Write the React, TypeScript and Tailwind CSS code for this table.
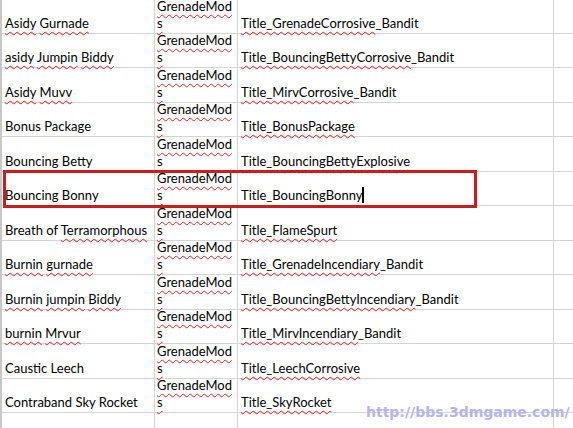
import React from "react";

type Row = {
  name: { t: string; bad?: boolean }[];
  title: string;
  tail?: string;
  titleBad?: boolean;
};

const rows: Row[] = [
  { name: [{ t: "Asidy", bad: true }, { t: "Gurnade", bad: true }], title: "Title_GrenadeCorrosive", tail: "_Bandit" },
  { name: [{ t: "asidy", bad: true }, { t: "Jumpin", bad: true }, { t: "Biddy", bad: true }], title: "Title_BouncingBettyCorrosive", tail: "_Bandit" },
  { name: [{ t: "Asidy", bad: true }, { t: "Muvv", bad: true }], title: "Title_MirvCorrosive", tail: "_Bandit" },
  { name: [{ t: "Bonus" }, { t: "Package" }], title: "Title_BonusPackage" },
  { name: [{ t: "Bouncing" }, { t: "Betty" }], title: "Title_BouncingBettyExplosive" },
  { name: [{ t: "Bouncing" }, { t: "Bonny" }], title: "Title_BouncingBonny", titleBad: false },
  { name: [{ t: "Breath" }, { t: "of" }, { t: "Terramorphous", bad: true }], title: "Title_FlameSpurt" },
  { name: [{ t: "Burnin", bad: true }, { t: "gurnade", bad: true }], title: "Title_GrenadeIncendiary", tail: "_Bandit" },
  { name: [{ t: "Burnin", bad: true }, { t: "jumpin", bad: true }, { t: "Biddy", bad: true }], title: "Title_BouncingBettyIncendiary", tail: "_Bandit" },
  { name: [{ t: "burnin", bad: true }, { t: "Mrvur", bad: true }], title: "Title_MirvIncendiary", tail: "_Bandit" },
  { name: [{ t: "Caustic" }, { t: "Leech" }], title: "Title_LeechCorrosive" },
  { name: [{ t: "Contraband" }, { t: "Sky" }, { t: "Rocket" }], title: "Title_SkyRocket" },
];

const wavy = "underline decoration-wavy decoration-[#e02020] decoration-1 underline-offset-[3px]";

function Cells({ r, active }: { r?: Row; active?: boolean }) {
  return (
    <>
      <div className="flex h-full w-[153px] shrink-0 items-end border-r border-[#d4d4d4] pl-[3px] pb-[1px] whitespace-pre">
        <span>
          {r?.name.map((w, i) => (
            <React.Fragment key={i}>
              {i > 0 && " "}
              <span className={w.bad ? wavy : ""}>{w.t}</span>
            </React.Fragment>
          ))}
        </span>
      </div>
      <div className="flex h-full w-[83px] shrink-0 flex-col justify-end border-r border-[#d4d4d4] pl-[2px] pb-[1px]">
        <span className={wavy + " w-fit"}>GrenadeMod</span>
        {r && <span className={wavy + " w-fit"}>s</span>}
      </div>
      <div className="flex h-full w-[316px] shrink-0 items-end border-r border-[#d4d4d4] pl-[3px] pb-[1px] whitespace-nowrap">
        {r && (
          <>
            <span className={r.titleBad === false ? "" : wavy}>{r.title}</span>
            {r.tail && <span>{r.tail}</span>}
            {active && <span className="mb-[1px] inline-block h-[16px] w-[2px] bg-black" />}
          </>
        )}
      </div>
      <div className="h-full flex-1" />
    </>
  );
}

export default function App() {
  const heights = ["h-[34px]", "h-[34px]", "h-[35px]", "h-[34px]", "h-[35px]", "h-[34px]", "h-[35px]", "h-[34px]", "h-[35px]", "h-[34px]", "h-[35px]", "h-[34px]", "h-[35px]"];
  return (
    <div
      className="relative h-[428px] w-[573px] overflow-hidden bg-white text-[13px] leading-[17px] text-black"
      style={{ fontFamily: "Lato, 'Liberation Sans', sans-serif" }}
    >
      <div className="flex flex-col border-l-2 border-[#c8c8c8]">
        {heights.map((h, i) => (
          <div key={i} className={`flex ${h} shrink-0 border-b border-[#d4d4d4]`}>
            <Cells r={rows[i]} active={i === 5} />
          </div>
        ))}
      </div>
      <div className="absolute left-[3px] top-[170px] h-[38px] w-[474px] border-[3px] border-[#c81e1e]" />
      <div
        className="absolute left-[366px] top-[404px] text-[14px] font-bold text-[#b4b4f2]"
        style={{ fontFamily: "'DejaVu Sans', sans-serif" }}
      >
        http://bbs.3dmgame.com/
      </div>
    </div>
  );
}
